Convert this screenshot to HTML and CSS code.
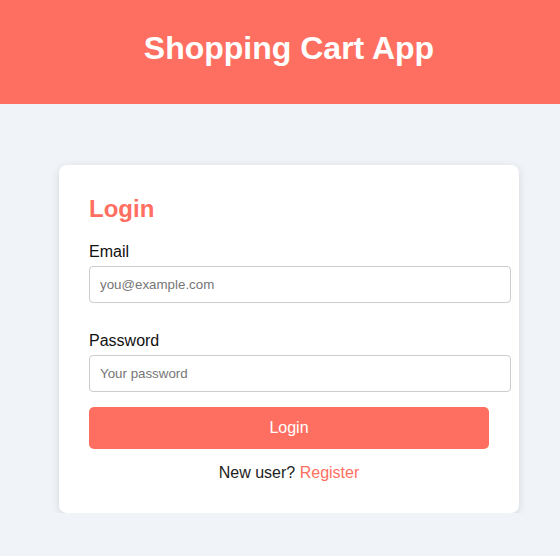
FILE: index.html
```html
<!DOCTYPE html>
<html lang="en">
<head>
<meta charset="utf-8">
<title>Shopping Cart App</title>
<link rel="stylesheet" href="styles.css">
</head>
<body>
<div class="page">
  <header class="app-header">
    <h1 class="app-title">Shopping Cart App</h1>
  </header>
  <main class="main">
    <section class="card">
      <h2 class="card-title">Login</h2>
      <form class="login-form">
        <div class="field">
          <label class="field-label" for="email">Email</label>
          <input class="field-input" id="email" type="email" placeholder="you@example.com">
        </div>
        <div class="field field-last">
          <label class="field-label" for="password">Password</label>
          <input class="field-input" id="password" type="password" placeholder="Your password">
        </div>
        <button class="btn-primary" type="button">Login</button>
      </form>
      <p class="switch">New user? <a class="switch-link" href="#">Register</a></p>
    </section>
  </main>
</div>
</body>
</html>
```

FILE: styles.css
```css
html, body {
  margin: 0;
  padding: 0;
}
body {
  background: #f0f4f8;
  font-family: "Liberation Sans", Arial, sans-serif;
  color: #222;
  overflow: hidden;
}
.page {
  width: 578px;
}
.app-header {
  background: #ff6f61;
  padding: 30px 0 37px;
  text-align: center;
}
.app-title {
  margin: 0;
  font-size: 32px;
  font-weight: bold;
  color: #fff;
  line-height: normal;
}
.main {
  padding-top: 61px;
}
.card {
  width: 400px;
  margin: 0 auto;
  background: #fff;
  padding: 30px 30px 31px;
  border-radius: 8px;
  box-shadow: 0 2px 8px rgba(0, 0, 0, 0.12);
}
.card-title {
  margin: 0 0 20px;
  font-size: 24px;
  font-weight: bold;
  color: #ff6f61;
  line-height: normal;
}
.login-form {
  display: flex;
  flex-direction: column;
  align-items: flex-start;
}
.field {
  display: flex;
  flex-direction: column;
  width: 100%;
  margin-bottom: 29px;
}
.field-last {
  margin-bottom: 15px;
}
.field-label {
  font-size: 16px;
  color: #111;
  margin-bottom: 5px;
  line-height: normal;
}
.field-input {
  box-sizing: content-box;
  width: 100%;
  padding: 10px;
  border: 1px solid #ccc;
  border-radius: 4px;
  font-family: "Liberation Sans", Arial, sans-serif;
  font-size: 13.333px;
  line-height: normal;
  background: #fff;
  color: #222;
  outline: none;
}
.field-input::placeholder {
  color: #767676;
}
.btn-primary {
  width: 100%;
  padding: 12px 0;
  border: none;
  border-radius: 5px;
  background: #ff6f61;
  color: #fff;
  font-family: "Liberation Sans", Arial, sans-serif;
  font-size: 16px;
  line-height: normal;
  cursor: pointer;
}
.switch {
  margin: 15px 0 0;
  text-align: center;
  font-size: 16px;
  line-height: normal;
  color: #222;
}
.switch-link {
  color: #ff6f61;
  text-decoration: none;
}
```
